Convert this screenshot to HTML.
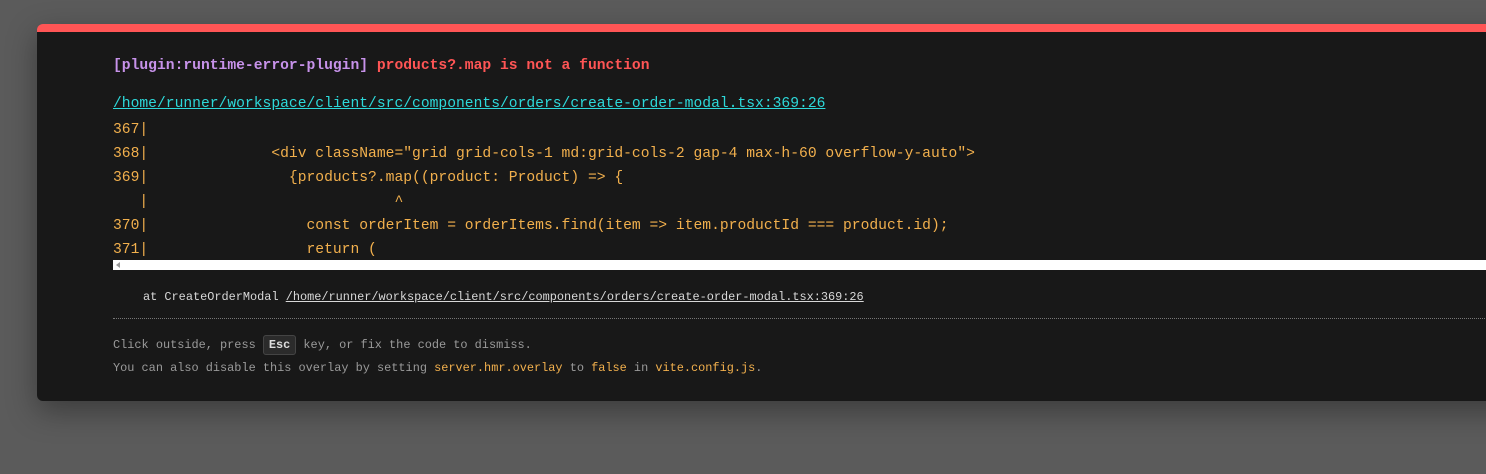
<!DOCTYPE html>
<html><head><meta charset="utf-8"><style>
html,body{margin:0;padding:0;width:1486px;height:474px;overflow:hidden;background:#5b5b5b;}
.win{position:absolute;left:37px;top:24px;width:1500px;height:377px;background:#181818;border-top:8px solid #ff5555;border-radius:6px 0 0 6px;box-sizing:border-box;box-shadow:0 10px 30px rgba(0,0,0,.35);font-family:"Liberation Mono",monospace;}
.t{position:absolute;left:76px;white-space:pre;font-size:14.67px;line-height:20px;}
.msg{top:24px;font-weight:bold;}
.plug{color:#c792ea;}
.err{color:#ff5555;}
.file{top:62px;color:#2dd9da;text-decoration:underline;}
.code{top:86px;color:#f2b04d;line-height:24px;}
.sb{position:absolute;left:76px;top:228px;width:1430px;height:10px;background:#fff;}
.sb:before{content:"";position:absolute;left:3px;top:2px;border-right:4px solid #999;border-top:3px solid transparent;border-bottom:3px solid transparent;}
.stack{top:255px;left:106px;font-size:11.9px;color:#d8d8d8;}
.stack u{color:#d8d8d8;}
.hr{position:absolute;left:76px;top:286px;width:1430px;border-top:1px dotted #777;}
.tip{font-size:11.9px;color:#9a9a9a;line-height:20px;}
.tip1{top:303px;}
.tip2{top:326px;}
kbd{font-family:inherit;background:#2b2b2b;color:#ddd;border:1px solid #444;border-radius:3px;padding:2px 5px;font-weight:bold;}
.y{color:#f2b04d;}
</style></head><body>
<div class="win">
<div class="t msg"><span class="plug">[plugin:runtime-error-plugin]</span> <span class="err">products?.map is not a function</span></div>
<div class="t file">/home/runner/workspace/client/src/components/orders/create-order-modal.tsx:369:26</div>
<div class="t code">367|
368|              &lt;div className="grid grid-cols-1 md:grid-cols-2 gap-4 max-h-60 overflow-y-auto"&gt;
369|                {products?.map((product: Product) =&gt; {
   |                            ^
370|                  const orderItem = orderItems.find(item =&gt; item.productId === product.id);
371|                  return (</div>
<div class="sb"></div>
<div class="t stack">at CreateOrderModal <u>/home/runner/workspace/client/src/components/orders/create-order-modal.tsx:369:26</u></div>
<div class="hr"></div>
<div class="t tip tip1">Click outside, press <kbd>Esc</kbd> key, or fix the code to dismiss.</div>
<div class="t tip tip2">You can also disable this overlay by setting <span class="y">server.hmr.overlay</span> to <span class="y">false</span> in <span class="y">vite.config.js</span>.</div>
</div>
</body></html>
